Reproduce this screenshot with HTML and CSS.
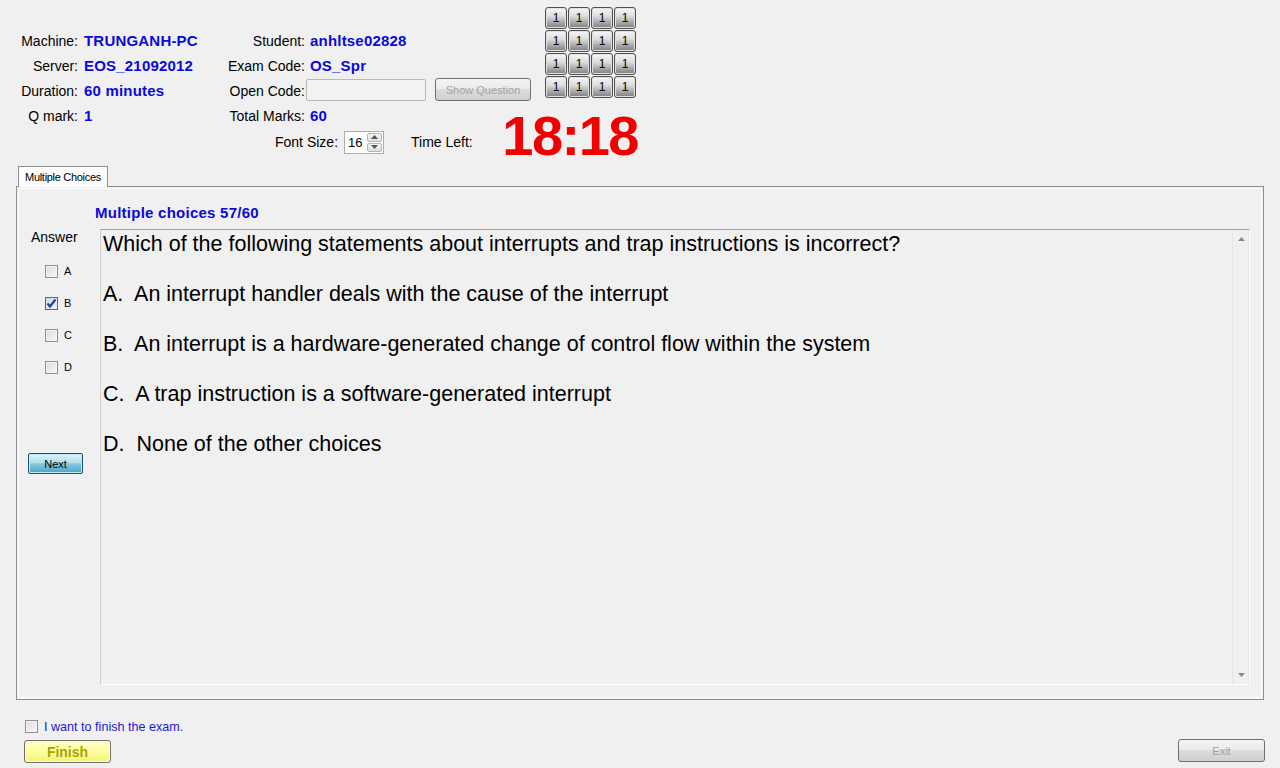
FILE: index.html
```html
<!DOCTYPE html>
<html>
<head>
<meta charset="utf-8">
<link rel="stylesheet" href="styles.css">
</head>
<body>
<div class="header">
  <div class="lbl l1 row1">Machine:</div>
  <div class="val v1 row1">TRUNGANH-PC</div>
  <div class="lbl l2 row1">Student:</div>
  <div class="val v2 row1">anhltse02828</div>

  <div class="lbl l1 row2">Server:</div>
  <div class="val v1 row2">EOS_21092012</div>
  <div class="lbl l2 row2">Exam Code:</div>
  <div class="val v2 row2">OS_Spr</div>

  <div class="lbl l1 row3">Duration:</div>
  <div class="val v1 row3">60 minutes</div>
  <div class="lbl l2 row3">Open Code:</div>
  <div class="opencode row3">
    <div class="codebox"></div>
    <div class="btn showq">Show Question</div>
  </div>

  <div class="lbl l1 row4">Q mark:</div>
  <div class="val v1 row4">1</div>
  <div class="lbl l2 row4">Total Marks:</div>
  <div class="val v2 row4">60</div>

  <div class="fontrow">
    <span class="lbl">Font Size:</span>
    <div class="spinner">
      <span class="spinval">16</span>
      <div class="spinbtns">
        <div class="spinup"><svg width="7" height="4" viewBox="0 0 7 4"><path d="M0 4 L3.5 0 L7 4 Z" fill="#555"/></svg></div>
        <div class="spindown"><svg width="7" height="4" viewBox="0 0 7 4"><path d="M0 0 L3.5 4 L7 0 Z" fill="#555"/></svg></div>
      </div>
    </div>
    <span class="lbl timeleft">Time Left:</span>
  </div>

  <div class="timer">18:18</div>

  <div class="qgrid">
    <div class="qb">1</div><div class="qb">1</div><div class="qb">1</div><div class="qb">1</div>
    <div class="qb">1</div><div class="qb">1</div><div class="qb">1</div><div class="qb">1</div>
    <div class="qb">1</div><div class="qb">1</div><div class="qb">1</div><div class="qb">1</div>
    <div class="qb">1</div><div class="qb">1</div><div class="qb">1</div><div class="qb">1</div>
  </div>
</div>

<div class="tabs">
  <div class="tabstrip"><div class="tab">Multiple Choices</div></div>
  <div class="panel">
    <div class="qtitle">Multiple choices 57/60</div>
    <div class="answers">
      <div class="anslabel">Answer</div>
      <div class="choice"><span class="cb"></span><span>A</span></div>
      <div class="choice"><span class="cb checked"><svg width="11" height="11" viewBox="0 0 11 11"><path d="M1.5 5.5 L4 8.5 L9.5 1.5" fill="none" stroke="#21468f" stroke-width="2.2"/></svg></span><span>B</span></div>
      <div class="choice"><span class="cb"></span><span>C</span></div>
      <div class="choice"><span class="cb"></span><span>D</span></div>
      <div class="btn next">Next</div>
    </div>
    <div class="qbox">
      <div class="qtext">
        <p>Which of the following statements about interrupts and trap instructions is incorrect?</p>
        <p>A.&nbsp; An interrupt handler deals with the cause of the interrupt</p>
        <p>B.&nbsp; An interrupt is a hardware-generated change of control flow within the system</p>
        <p>C.&nbsp; A trap instruction is a software-generated interrupt</p>
        <p>D.&nbsp; None of the other choices</p>
      </div>
      <div class="vscroll">
        <svg width="7" height="4" viewBox="0 0 7 4"><path d="M0 4 L3.5 0 L7 4 Z" fill="#8a8a8a"/></svg>
        <svg width="7" height="4" viewBox="0 0 7 4"><path d="M0 0 L3.5 4 L7 0 Z" fill="#8a8a8a"/></svg>
      </div>
    </div>
  </div>
</div>

<div class="footer">
  <div class="finishrow"><span class="cb"></span><span class="finishtext">I want to finish the exam.</span></div>
  <div class="btnrow">
    <div class="btn finish">Finish</div>
    <div class="btn exit">Exit</div>
  </div>
</div>
</body>
</html>
```

FILE: styles.css
```css
html, body {
  margin: 0;
  padding: 0;
  background: #f0f0f0;
  width: 1280px;
  height: 768px;
  overflow: hidden;
  font-family: "Liberation Sans", Arial, sans-serif;
  color: #000;
}

.header {
  display: grid;
  grid-template-columns: 16px 62px 142px 85px 197px 43px 92px 1fr;
  grid-template-rows: 28px 25px 25px 25px 25px 28px;
  height: 166px;
  box-sizing: border-box;
  padding-bottom: 10px;
  align-items: center;
}

.lbl { font-size: 14px; white-space: nowrap; }
.val { font-size: 15px; font-weight: bold; color: #0a0ad8; white-space: nowrap; }
.v1 { letter-spacing: 0.2px; }

.l1 { grid-column: 2; text-align: right; }
.v1 { grid-column: 3; padding-left: 6px; }
.l2 { grid-column: 4; text-align: right; }
.v2 { grid-column: 5 / 7; padding-left: 5px; letter-spacing: 0.2px; }

.row1 { grid-row: 2; }
.row2 { grid-row: 3; }
.row3 { grid-row: 4; }
.row4 { grid-row: 5; }

.opencode {
  grid-column: 5 / 7;
  align-self: start;
  display: flex;
  align-items: flex-start;
  padding-left: 1px;
}
.codebox {
  margin-top: 1px;
  width: 120px;
  height: 22px;
  box-sizing: border-box;
  border: 1px solid #b8b8b8;
  border-radius: 2px;
  background: #f3f3f3;
}
.btn {
  box-sizing: border-box;
  display: flex;
  align-items: center;
  justify-content: center;
  border: 1px solid #707070;
  border-radius: 3px;
  white-space: nowrap;
}
.showq {
  margin-left: 9px;
  width: 96px;
  height: 23px;
  font-size: 11px;
  color: #a3a3a3;
  background: linear-gradient(#f4f4f4 0%, #ebebeb 45%, #dcdcdc 50%, #cfcfcf 100%);
}

.fontrow {
  grid-column: 4 / 7;
  grid-row: 6;
  display: flex;
  align-items: center;
  padding-left: 55px;
}
.spinner {
  margin-left: 6px;
  width: 40px;
  height: 23px;
  box-sizing: border-box;
  border: 1px solid #abadb3;
  background: #fff;
  display: flex;
  align-items: stretch;
}
.spinval {
  flex: 1;
  font-size: 13px;
  display: flex;
  align-items: center;
  padding-left: 3px;
}
.spinbtns {
  width: 15px;
  display: flex;
  flex-direction: column;
  padding: 1px;
  gap: 1px;
}
.spinup, .spindown {
  flex: 1;
  display: flex;
  align-items: center;
  justify-content: center;
  border: 1px solid #b6b6b6;
  border-radius: 2px;
  background: linear-gradient(#f6f6f6, #dedede);
}
.timeleft { margin-left: 27px; }

.timer {
  grid-column: 6 / 8;
  grid-row: 5 / 7;
  align-self: start;
  justify-self: end;
  margin-top: 12px;
  font-size: 56px;
  line-height: 42px;
  font-weight: bold;
  color: #f00000;
  letter-spacing: -1.5px;
  margin-right: -1px;
}

.qgrid {
  grid-column: 7;
  grid-row: 1 / 5;
  align-self: start;
  margin-top: 7px;
  display: grid;
  grid-template-columns: repeat(4, 22px);
  grid-auto-rows: 22px;
  gap: 1px;
}
.qb {
  box-sizing: border-box;
  border: 1px solid #505050;
  border-radius: 3px;
  box-shadow: inset 0 0 0 1px #e0e0e0;
  background: linear-gradient(#f6f6f6 0%, #dedede 40%, #a9a9a9 72%, #7e7e7e 100%);
  font-size: 12px;
  display: flex;
  align-items: center;
  justify-content: center;
}

.tabs {
  margin-left: 16px;
  width: 1248px;
}
.tabstrip {
  height: 20px;
  display: flex;
  align-items: flex-end;
  padding-left: 2px;
}
.tab {
  height: 21px;
  box-sizing: border-box;
  width: 90px;
  border: 1px solid #8e8f8f;
  border-bottom: none;
  background: #fcfcfc;
  font-size: 11px;
  letter-spacing: -0.3px;
  display: flex;
  align-items: center;
  justify-content: center;
  margin-bottom: -1px;
  position: relative;
  z-index: 1;
}
.panel {
  height: 514px;
  box-sizing: border-box;
  border: 1px solid #8e8f8f;
  box-shadow: inset 0 0 0 1px #f0f0f0, inset 0 0 0 2px #ffffff;
  display: grid;
  grid-template-columns: 83px 1150px;
  grid-template-rows: 42px 456px;
}
.qtitle {
  grid-column: 2;
  grid-row: 1;
  align-self: end;
  margin-left: -5px;
  padding-bottom: 8px;
  font-size: 15px;
  letter-spacing: 0.25px;
  line-height: 16px;
  font-weight: bold;
  color: #0a0ad8;
  white-space: nowrap;
}
.answers {
  grid-column: 1;
  grid-row: 2;
  display: flex;
  flex-direction: column;
  align-items: flex-start;
}
.anslabel {
  font-size: 14px;
  line-height: 16px;
  padding-left: 14px;
  margin-bottom: 10px;
}
.choice {
  height: 32px;
  display: flex;
  align-items: center;
  gap: 6px;
  padding-left: 28px;
  font-size: 11px;
}
.cb {
  width: 13px;
  height: 13px;
  box-sizing: border-box;
  border: 1px solid #8f8f8f;
  background: linear-gradient(135deg, #dcdcdc, #f8f8f8);
  box-shadow: inset 0 0 0 1px #f4f4f4;
  display: flex;
  align-items: center;
  justify-content: center;
}
.cb.checked {
  border-color: #3c6ea5;
  background: linear-gradient(135deg, #c5dcf3, #eef5fc);
  box-shadow: none;
}
.next {
  margin-top: 70px;
  margin-left: 11px;
  width: 55px;
  height: 21px;
  font-size: 11px;
  border: 1px solid #1f4f6a;
  border-radius: 2px;
  background: linear-gradient(#dff3f9 0%, #b2e0ee 45%, #86c8dc 52%, #4da3bf 100%);
  box-shadow: inset 0 0 0 1px #bfeaf7;
}

.qbox {
  grid-column: 2;
  grid-row: 2;
  box-sizing: border-box;
  border-top: 1px solid #a0a0a0;
  border-left: 1px solid #cfcfcf;
  border-right: 1px solid #ffffff;
  border-bottom: 1px solid #ffffff;
  display: flex;
}
.qtext {
  flex: 1;
  padding: 2px 2px 0 2px;
  font-size: 21.5px;
  line-height: 25px;
}
.qtext p {
  margin: 0 0 25px 0;
  white-space: nowrap;
}
.vscroll {
  width: 16px;
  border-left: 1px solid #e6e6e6;
  box-shadow: inset -1px 0 0 #e6e6e6;
  display: flex;
  flex-direction: column;
  align-items: center;
  justify-content: space-between;
  padding: 7px 0 7px 0;
}

.footer {
  padding-top: 20px;
}
.finishrow {
  display: flex;
  align-items: center;
  gap: 6px;
  padding-left: 25px;
  height: 13px;
}
.finishtext {
  font-size: 12.6px;
  color: #1a1ad0;
}
.btnrow {
  display: flex;
  justify-content: space-between;
  align-items: flex-start;
  padding: 0 15px 0 24px;
  margin-top: 6px;
}
.finish {
  margin-top: 1px;
  width: 87px;
  height: 23px;
  font-size: 14px;
  font-weight: bold;
  color: #a5a500;
  background: linear-gradient(#ffffc8 0%, #ffff9e 50%, #f2f27a 100%);
  box-shadow: inset 0 0 0 1px #fffff0;
}
.exit {
  width: 87px;
  height: 23px;
  font-size: 11px;
  color: #a0a0a0;
  background: linear-gradient(#f4f4f4 0%, #ebebeb 45%, #dcdcdc 50%, #cfcfcf 100%);
}
```
